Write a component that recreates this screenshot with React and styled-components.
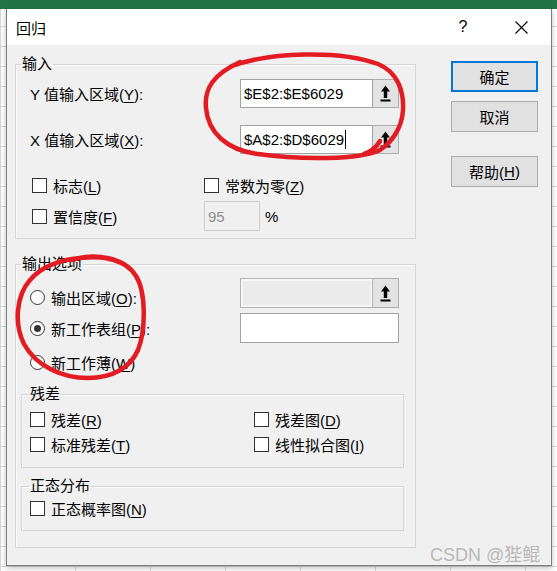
import React from "react";
import styled, { createGlobalStyle } from "styled-components";

const GlobalStyle = createGlobalStyle`
  html, body {
    margin: 0;
    padding: 0;
  }
  body {
    width: 557px;
    height: 571px;
    overflow: hidden;
    font-family: "Liberation Sans", "Noto Sans CJK SC", sans-serif;
    background-color: #fff;
    background-image: linear-gradient(#d8d8d8 1px, transparent 1px),
      linear-gradient(90deg, #d8d8d8 1px, transparent 1px);
    background-size: 75px 20px;
    background-position: 0 6px;
  }
`;

const Page = styled.div`
  position: relative;
  width: 557px;
  height: 571px;
  display: flex;
  flex-direction: column;
`;

const Ribbon = styled.div`
  height: 9px;
  background: #217346;
`;

const Stage = styled.div`
  padding-left: 6px;
`;

const Dialog = styled.div`
  width: 546px;
  height: 557px;
  box-sizing: border-box;
  border: 1px solid #7c7c7c;
  border-top: none;
  background: #f0f0f0;
  display: flex;
  flex-direction: column;
  box-shadow: 0 2px 6px rgba(0, 0, 0, 0.25);
`;

const TitleBar = styled.div`
  height: 36px;
  flex-shrink: 0;
  background: #fff;
  display: flex;
  align-items: center;
  padding-left: 9px;
`;

const Title = styled.span`
  font-size: 15px;
  color: #000;
`;

const TitleControls = styled.div`
  margin-left: auto;
  display: flex;
  gap: 18px;
  padding-right: 10px;
`;

const TitleButton = styled.div`
  width: 40px;
  height: 36px;
  display: flex;
  align-items: center;
  justify-content: center;
  font-size: 16px;
  color: #000;
`;

const Body = styled.div`
  flex: 1;
  display: flex;
  padding-left: 8px;
`;

const LeftColumn = styled.div`
  width: 401px;
  display: flex;
  flex-direction: column;
`;

const RightColumn = styled.div`
  width: 87px;
  margin-left: 35px;
  padding-top: 16px;
  display: flex;
  flex-direction: column;
`;

const DialogButton = styled.div`
  height: 31px;
  box-sizing: border-box;
  margin-top: ${(p) => p.$top || 0}px;
  border: ${(p) => (p.$primary ? "2px solid #0078d7" : "1px solid #adadad")};
  background: #e1e1e1;
  display: flex;
  align-items: center;
  justify-content: center;
  font-size: 15px;
  color: #000;
`;

const Group = styled.fieldset`
  margin: ${(p) => p.$top}px 0 0 0;
  padding: 0;
  min-width: 0;
  border: 1px solid #d5d5d5;
  box-shadow: inset 1px 1px 0 #fbfbfb;
`;

const Legend = styled.legend`
  margin-left: ${(p) => p.$indent}px;
  padding: 0 1px;
  font-size: 15px;
  line-height: 20px;
  color: #000;
`;

const GroupBody = styled.div`
  padding: ${(p) => p.$pad};
  display: flex;
  flex-direction: column;
`;

const Row = styled.div`
  display: flex;
  align-items: center;
  height: ${(p) => p.$h}px;
  margin-top: ${(p) => p.$top || 0}px;
  padding-left: ${(p) => p.$indent || 0}px;
`;

const FieldLabel = styled.span`
  width: ${(p) => p.$w}px;
  flex-shrink: 0;
  font-size: 15px;
  color: #000;
  white-space: nowrap;
  margin-top: ${(p) => p.$drop || 0}px;
`;

const RefBox = styled.div`
  display: flex;
  width: 159px;
  height: 100%;
`;

const TextField = styled.div`
  flex: 1;
  box-sizing: border-box;
  height: 100%;
  border: 1px solid ${(p) => (p.$disabled ? "#b4b4b4" : "#a2a2a2")};
  background: ${(p) => (p.$disabled ? "#ebebeb" : "#fff")};
  box-shadow: ${(p) => (p.$disabled ? "inset 0 0 0 2px #f6f6f6" : "none")};
  display: flex;
  align-items: center;
  padding-left: 3px;
  font-size: 15px;
  color: #000;
`;

const Caret = styled.span`
  display: inline-block;
  width: 1px;
  height: 19px;
  background: #000;
  margin-left: 1px;
`;

const PickButton = styled.div`
  width: 26px;
  box-sizing: border-box;
  height: 100%;
  border: 1px solid #adadad;
  border-left: none;
  background: #e3e3e3;
  display: flex;
  align-items: center;
  justify-content: center;
`;

const Option = styled.label`
  display: flex;
  align-items: center;
  gap: 6px;
  width: ${(p) => (p.$w ? `${p.$w}px` : "auto")};
  flex-shrink: 0;
  font-size: 15px;
  color: #000;
  white-space: nowrap;
  margin-top: ${(p) => p.$drop || 0}px;
`;

const Check = styled.span`
  width: 15px;
  height: 15px;
  box-sizing: border-box;
  border: 1px solid #333;
  background: #fff;
  flex-shrink: 0;
`;

const Radio = styled.span`
  width: 15px;
  height: 15px;
  box-sizing: border-box;
  border: 1px solid #333;
  border-radius: 50%;
  background: #fff;
  flex-shrink: 0;
  display: flex;
  align-items: center;
  justify-content: center;

  &::after {
    content: "";
    width: 7px;
    height: 7px;
    border-radius: 50%;
    background: ${(p) => (p.$on ? "#333" : "transparent")};
  }
`;

const ConfField = styled.div`
  width: 56px;
  height: 30px;
  box-sizing: border-box;
  border: 1px solid #cccccc;
  background: #f0f0f0;
  display: flex;
  align-items: center;
  padding-left: 3px;
  font-size: 15px;
  color: #8d8d8d;
`;

const Percent = styled.span`
  margin-left: 5px;
  font-size: 15px;
  color: #000;
`;

const U = styled.span`
  text-decoration: underline;
  text-underline-offset: 2px;
`;

const Marks = styled.svg`
  position: absolute;
  left: 0;
  top: 0;
  pointer-events: none;
`;

const Watermark = styled.div`
  position: absolute;
  left: 430px;
  top: 540px;
  font-size: 18px;
  color: #b5b5b5;
  white-space: nowrap;
  text-shadow: 0 0 1px #fff;
`;

const PickIcon = () => (
  <svg width="11" height="17" viewBox="0 0 11 17">
    <polygon points="5.5,0.5 10,6.5 7.2,6.5 7.2,13 3.8,13 3.8,6.5 1,6.5" fill="#000" />
    <rect x="0.5" y="14.5" width="10" height="2" fill="#000" />
  </svg>
);

const CloseIcon = () => (
  <svg width="13" height="13" viewBox="0 0 13 13">
    <path d="M0.5 0.5 L12.5 12.5 M12.5 0.5 L0.5 12.5" stroke="#000" strokeWidth="1.1" />
  </svg>
);

export default function App() {
  return (
    <Page>
      <GlobalStyle />
      <Ribbon />
      <Stage>
        <Dialog>
          <TitleBar>
            <Title>回归</Title>
            <TitleControls>
              <TitleButton>?</TitleButton>
              <TitleButton>
                <CloseIcon />
              </TitleButton>
            </TitleControls>
          </TitleBar>
          <Body>
            <LeftColumn>
              <Group $top={9}>
                <Legend $indent={5}>输入</Legend>
                <GroupBody $pad="5px 0 7px 0">
                  <Row $h={29} $indent={14}>
                    <FieldLabel $w={210}>
                      Y 值输入区域(<U>Y</U>):
                    </FieldLabel>
                    <RefBox>
                      <TextField>$E$2:$E$6029</TextField>
                      <PickButton>
                        <PickIcon />
                      </PickButton>
                    </RefBox>
                  </Row>
                  <Row $h={29} $top={17} $indent={14}>
                    <FieldLabel $w={210}>
                      X 值输入区域(<U>X</U>):
                    </FieldLabel>
                    <RefBox>
                      <TextField>
                        $A$2:$D$6029
                        <Caret />
                      </TextField>
                      <PickButton>
                        <PickIcon />
                      </PickButton>
                    </RefBox>
                  </Row>
                  <Row $h={22} $top={20} $indent={16}>
                    <Option $w={172}>
                      <Check />
                      <span>
                        标志(<U>L</U>)
                      </span>
                    </Option>
                    <Option>
                      <Check />
                      <span>
                        常数为零(<U>Z</U>)
                      </span>
                    </Option>
                  </Row>
                  <Row $h={30} $top={5} $indent={16}>
                    <Option $w={172}>
                      <Check />
                      <span>
                        置信度(<U>F</U>)
                      </span>
                    </Option>
                    <ConfField>95</ConfField>
                    <Percent>%</Percent>
                  </Row>
                </GroupBody>
              </Group>

              <Group $top={15}>
                <Legend $indent={5}>输出选项</Legend>
                <GroupBody $pad="4px 11px 16px 5px">
                  <Row $h={30} $indent={9}>
                    <Option $w={210} $drop={8}>
                      <Radio />
                      <span>
                        输出区域(<U>O</U>):
                      </span>
                    </Option>
                    <RefBox>
                      <TextField $disabled />
                      <PickButton>
                        <PickIcon />
                      </PickButton>
                    </RefBox>
                  </Row>
                  <Row $h={30} $top={5} $indent={9}>
                    <Option $w={210}>
                      <Radio $on />
                      <span>
                        新工作表组(<U>P</U>):
                      </span>
                    </Option>
                    <RefBox>
                      <TextField />
                    </RefBox>
                  </Row>
                  <Row $h={22} $top={8} $indent={9}>
                    <Option>
                      <Radio />
                      <span>
                        新工作薄(<U>W</U>)
                      </span>
                    </Option>
                  </Row>

                  <Group $top={11}>
                    <Legend $indent={7}>残差</Legend>
                    <GroupBody $pad="4px 0 12px 0">
                      <Row $h={22} $indent={8}>
                        <Option $w={224}>
                          <Check />
                          <span>
                            残差(<U>R</U>)
                          </span>
                        </Option>
                        <Option>
                          <Check />
                          <span>
                            残差图(<U>D</U>)
                          </span>
                        </Option>
                      </Row>
                      <Row $h={22} $top={3} $indent={8}>
                        <Option $w={224}>
                          <Check />
                          <span>
                            标准残差(<U>T</U>)
                          </span>
                        </Option>
                        <Option>
                          <Check />
                          <span>
                            线性拟合图(<U>I</U>)
                          </span>
                        </Option>
                      </Row>
                    </GroupBody>
                  </Group>

                  <Group $top={8}>
                    <Legend $indent={7}>正态分布</Legend>
                    <GroupBody $pad="1px 0 11px 0">
                      <Row $h={22} $indent={8}>
                        <Option>
                          <Check />
                          <span>
                            正态概率图(<U>N</U>)
                          </span>
                        </Option>
                      </Row>
                    </GroupBody>
                  </Group>
                </GroupBody>
              </Group>
            </LeftColumn>

            <RightColumn>
              <DialogButton $primary>确定</DialogButton>
              <DialogButton $top={9}>取消</DialogButton>
              <DialogButton $top={24}>
                帮助(<U>H</U>)
              </DialogButton>
            </RightColumn>
          </Body>
        </Dialog>
      </Stage>

      <Marks width="557" height="571" viewBox="0 0 557 571">
        <g fill="none" stroke="#e31b23" strokeWidth="4.5" strokeLinecap="round" strokeLinejoin="round">
          <path d="M232 66 C270 52 340 50 378 64 C398 72 404 92 403 110 C402 128 392 142 380 150 C360 160 300 160 258 154 C226 150 208 132 206 108 C204 88 214 74 240 62" />
          <path d="M364 154 Q374 151 380 141" />
          <path d="M72 260 C95 252 125 258 136 276 C146 292 146 330 138 350 C130 368 112 378 88 378 C62 378 36 366 24 344 C14 324 16 296 30 280 C42 266 58 260 80 258 C100 256 112 258 124 264" />
        </g>
      </Marks>
      <Watermark>CSDN @狴鲲</Watermark>
    </Page>
  );
}
